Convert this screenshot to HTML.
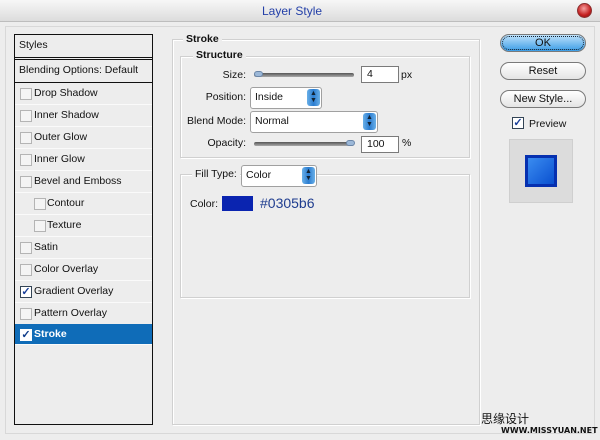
<!DOCTYPE html>
<html><head><meta charset="utf-8"><style>
*{box-sizing:border-box;margin:0;padding:0}
body{width:600px;height:440px;background:#ededed;font-family:"Liberation Sans",sans-serif;font-size:10.5px;color:#111;position:relative;overflow:hidden}
.abs{position:absolute}
#title{left:0;top:0;width:600px;height:22px;background:linear-gradient(#f7f7f7,#dcdcdc);border-bottom:1px solid #bdbdbd}
#title span{position:absolute;left:262px;top:4px;color:#2440a8;font-size:12px}
#close{left:577px;top:3px;width:15px;height:15px;border-radius:50%;background:radial-gradient(circle at 45% 35%,#f6a0a0,#c42020 60%,#801010);border:1px solid #8a3030}
#outer{left:5px;top:26px;width:590px;height:408px;border:1px solid #d8d8d8}
#list{left:14px;top:34px;width:139px;height:391px;border:1px solid #111;background:#ededed}
.row{position:absolute;left:0;width:137px;height:22px;border-bottom:1px solid #fafafa;padding-left:19px;line-height:21px;white-space:nowrap}
.cb{position:absolute;left:5px;top:5px;width:12px;height:12px;border:1px solid #b4b4b4;background:#f4f4f4}
.sub{padding-left:32px}.sub .cb{left:19px}
.sel{background:#0f6cb8;color:#fff;font-weight:bold}
.grp{border:1px solid #d0d0d0;box-shadow:1px 1px 0 #fff inset,1px 1px 0 #fff}
.lbl{position:absolute;background:#ededed;font-weight:bold;padding:0 3px}
.r{text-align:right}
.sl{height:4px;border-radius:2px;background:linear-gradient(#555,#aaa);}
.knob{width:9px;height:6px;border-radius:3px;background:#9cb8d8;border:1px solid #6b86a8}
.inp{background:#fff;border:1px solid #7a7a7a;padding-left:5px;line-height:14px}
.dd{background:#fff;border:1px solid #a0a0a0;border-radius:3px;padding-left:4px;line-height:19px}
.dd i{position:absolute;right:1px;top:1px;width:13px;height:17px;border-radius:3px;background:linear-gradient(90deg,#6ab0e8,#2a7cd0,#6ab0e8);color:#123;font-size:7px;line-height:7px;text-align:center;font-style:normal;padding-top:1px}
.btn{width:86px;height:18px;border-radius:9px;border:1px solid #7a7a7a;background:linear-gradient(#fff,#e4e4e4);text-align:center;line-height:16px;font-size:11px}
</style></head><body>
<div id="title" class="abs"><span>Layer Style</span></div>
<div id="close" class="abs"></div>
<div id="outer" class="abs"></div>
<div id="list" class="abs">
 <div class="row" style="top:0;padding-left:4px;border-bottom:3px double #111;height:25px">Styles</div>
 <div class="row" style="top:25px;padding-left:4px;border-bottom:1px solid #111;height:23px">Blending Options: Default</div>
 <div class="row" style="top:48px"><b class="cb"></b>Drop Shadow</div>
 <div class="row" style="top:70px"><b class="cb"></b>Inner Shadow</div>
 <div class="row" style="top:92px"><b class="cb"></b>Outer Glow</div>
 <div class="row" style="top:114px"><b class="cb"></b>Inner Glow</div>
 <div class="row" style="top:136px"><b class="cb"></b>Bevel and Emboss</div>
 <div class="row sub" style="top:158px"><b class="cb"></b>Contour</div>
 <div class="row sub" style="top:180px"><b class="cb"></b>Texture</div>
 <div class="row" style="top:202px"><b class="cb"></b>Satin</div>
 <div class="row" style="top:224px"><b class="cb"></b>Color Overlay</div>
 <div class="row" style="top:246px"><b class="cb" style="background:#fff;border-color:#345;color:#1a3f9a;font-size:11px;line-height:10px;font-weight:bold;text-align:center">✓</b>Gradient Overlay</div>
 <div class="row" style="top:268px"><b class="cb"></b>Pattern Overlay</div>
 <div class="row sel" style="top:289px;height:21px"><b class="cb" style="background:#fff;border-color:#fff;color:#0f3c8a;font-size:11px;line-height:10px;text-align:center">✓</b>Stroke</div>
</div>

<div class="abs grp" style="left:172px;top:39px;width:308px;height:386px"></div>
<div class="abs lbl" style="left:183px;top:33px">Stroke</div>
<div class="abs grp" style="left:180px;top:56px;width:290px;height:102px"></div>
<div class="abs lbl" style="left:193px;top:49px">Structure</div>
<div class="abs r" style="left:190px;top:69px;width:56px">Size:</div>
<div class="abs sl" style="left:254px;top:73px;width:100px"></div>
<div class="abs knob" style="left:254px;top:71px"></div>
<div class="abs inp" style="left:361px;top:66px;width:38px;height:17px">4</div>
<div class="abs" style="left:401px;top:69px">px</div>
<div class="abs r" style="left:190px;top:91px;width:56px">Position:</div>
<div class="abs dd" style="left:250px;top:87px;width:72px;height:22px">Inside<i>▲<br>▼</i></div>
<div class="abs r" style="left:180px;top:115px;width:66px">Blend Mode:</div>
<div class="abs dd" style="left:250px;top:111px;width:128px;height:22px">Normal<i>▲<br>▼</i></div>
<div class="abs r" style="left:190px;top:137px;width:56px">Opacity:</div>
<div class="abs sl" style="left:254px;top:142px;width:100px"></div>
<div class="abs knob" style="left:346px;top:140px"></div>
<div class="abs inp" style="left:361px;top:136px;width:38px;height:17px">100</div>
<div class="abs" style="left:402px;top:137px">%</div>

<div class="abs grp" style="left:180px;top:174px;width:290px;height:124px"></div>
<div class="abs" style="left:192px;top:168px;background:#ededed;padding:0 3px">Fill Type:</div>
<div class="abs dd" style="left:241px;top:165px;width:76px;height:22px">Color<i>▲<br>▼</i></div>
<div class="abs" style="left:190px;top:198px">Color:</div>
<div class="abs" style="left:222px;top:196px;width:31px;height:15px;background:#0a24b0"></div>
<div class="abs" style="left:260px;top:195px;font-size:14px;color:#1f3d8f">#0305b6</div>

<div class="abs btn" style="left:500px;top:34px;background:linear-gradient(#bfe2fb,#3b9de6);outline:1px dotted #123;outline-offset:-3px">OK</div>
<div class="abs btn" style="left:500px;top:62px">Reset</div>
<div class="abs btn" style="left:500px;top:90px">New Style...</div>
<div class="abs" style="left:512px;top:117px;width:12px;height:12px;background:#fff;border:1px solid #345;color:#1a3f9a;font-size:11px;line-height:10px;font-weight:bold;text-align:center">✓</div>
<div class="abs" style="left:529px;top:118px">Preview</div>
<div class="abs" style="left:509px;top:139px;width:64px;height:64px;background:#dcdcdc;border:1px solid #cfcfcf"></div>
<div class="abs" style="left:525px;top:155px;width:32px;height:32px;background:linear-gradient(135deg,#3a8cf0,#0a50d0);border:3px solid #0630b0"></div>

<div class="abs" style="left:481px;top:410px;font-size:12px;font-family:'WenQuanYi Zen Hei','Noto Sans CJK SC',sans-serif">思缘设计</div>
<div class="abs" style="left:501px;top:426px;font-size:8px;font-family:'DejaVu Sans',sans-serif;font-weight:bold">WWW.MISSYUAN.NET</div>
</body></html>
